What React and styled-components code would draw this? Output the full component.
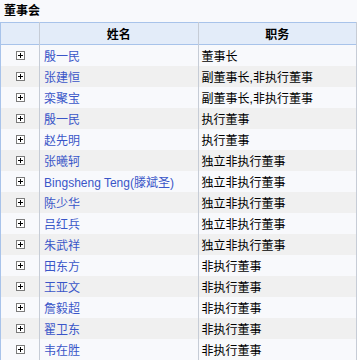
import React from 'react';
import styled, { createGlobalStyle } from 'styled-components';

const GlobalStyle = createGlobalStyle`
	html, body {
		margin: 0;
		padding: 0;
		background: #f8f9fc;
	}
	body {
		font-family: "Liberation Sans", "Noto Sans CJK SC", sans-serif;
		font-size: 12px;
		color: #000;
	}
`;

const Panel = styled.div`
	width: 357px;
	height: 360px;
	overflow: hidden;
`;

const Title = styled.div`
	height: 22px;
	line-height: 22px;
	padding-left: 4px;
	font-weight: bold;
	font-size: 12px;
`;

const Table = styled.table`
	width: 357px;
	border-collapse: collapse;
	table-layout: fixed;
	border-left: 1px solid #a8c3ea;
	border-right: 1px solid #a8c3ea;
`;

const HeadRow = styled.tr`
	background: #e3ecf9;
	border-top: 1px solid #a8c3ea;
	border-bottom: 1px solid #a8c3ea;
`;

const HeadCell = styled.th`
	height: 21px;
	padding: 0;
	font-weight: bold;
	text-align: center;
	border-right: 1px solid #c6ccd6;
`;

const Row = styled.tr`
	background: ${props => props.$alt ? '#f0f0f0' : '#f8f9fc'};
`;

const Cell = styled.td`
	height: 21px;
	padding: 0 0 0 ${props => props.$pad || 0}px;
	border-right: 1px solid #c6ccd6;
	white-space: nowrap;
	overflow: hidden;
	text-align: ${props => props.$center ? 'center' : 'left'};
`;

const NameLink = styled.a`
	color: #3a56c8;
	text-decoration: none;
`;

const Expander = styled.span`
	display: inline-block;
	position: relative;
	width: 7px;
	height: 7px;
	border: 1px solid #7b7b7b;
	background: #fff;
	vertical-align: middle;
	margin-top: -2px;

	&::before, &::after {
		content: "";
		position: absolute;
		background: #000;
	}
	&::before {
		left: 1px;
		top: 3px;
		width: 5px;
		height: 1px;
	}
	&::after {
		left: 3px;
		top: 1px;
		width: 1px;
		height: 5px;
	}
`;

const members = [
	['殷一民', '董事长'],
	['张建恒', '副董事长,非执行董事'],
	['栾聚宝', '副董事长,非执行董事'],
	['殷一民', '执行董事'],
	['赵先明', '执行董事'],
	['张曦轲', '独立非执行董事'],
	['Bingsheng Teng(滕斌圣)', '独立非执行董事'],
	['陈少华', '独立非执行董事'],
	['吕红兵', '独立非执行董事'],
	['朱武祥', '独立非执行董事'],
	['田东方', '非执行董事'],
	['王亚文', '非执行董事'],
	['詹毅超', '非执行董事'],
	['翟卫东', '非执行董事'],
	['韦在胜', '非执行董事'],
];

const App = () => {
	return (
		<Panel>
			<GlobalStyle />
			<Title>董事会</Title>
			<Table>
				<colgroup>
					<col style={{ width: 39 }} />
					<col style={{ width: 158 }} />
					<col style={{ width: 158 }} />
				</colgroup>
				<thead>
					<HeadRow>
						<HeadCell></HeadCell>
						<HeadCell>姓名</HeadCell>
						<HeadCell>职务</HeadCell>
					</HeadRow>
				</thead>
				<tbody>
					{members.map(([name, duty], i) => (
						<Row key={i} $alt={i % 2 === 1}>
							<Cell $center><Expander /></Cell>
							<Cell $pad={4}><NameLink href="#">{name}</NameLink></Cell>
							<Cell $pad={3}>{duty}</Cell>
						</Row>
					))}
				</tbody>
			</Table>
		</Panel>
	);
};

export default App;
